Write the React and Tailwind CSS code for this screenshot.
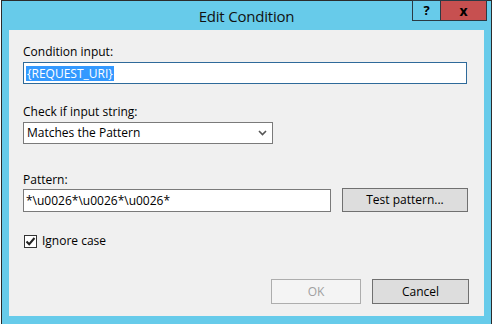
import React from "react";

const font = { fontFamily: '"Open Sans", "Noto Sans", sans-serif' };

function Chevron() {
  return (
    <svg width="9" height="6" viewBox="0 0 9 6" className="block">
      <path d="M1 1 L4.5 4.5 L8 1" fill="none" stroke="#555" strokeWidth="1.6" />
    </svg>
  );
}

function Check() {
  return (
    <svg width="11" height="11" viewBox="0 0 11 11" className="block">
      <path d="M1.5 5.5 L4.2 8.2 L9.5 2" fill="none" stroke="#222" strokeWidth="2" />
    </svg>
  );
}

export default function App() {
  return (
    <div className="w-[498px] h-[324px] bg-white overflow-hidden flex text-[12px] text-black" style={font}>
      <div className="ml-[1px] w-[491px] h-[324px] border-t border-l border-r border-[#2b2b2b] bg-[#67cbea] flex flex-col">
        {/* title bar */}
        <div className="relative h-[29px] flex justify-center items-center">
          <span className="text-[15px] text-[#111] leading-none pt-[1px] tracking-[-0.2px]">Edit Condition</span>
          <div className="absolute right-[4px] top-[-1px] flex h-[21px]">
            <div className="w-[29px] h-full border border-[#2b3a44] flex items-center justify-center font-bold text-[13px] leading-none">
              ?
            </div>
            <div className="w-[46px] h-full border border-l-0 border-[#2b3a44] bg-[#c75050] flex items-center justify-center font-bold text-[14px] leading-none">
              x
            </div>
          </div>
        </div>

        {/* body */}
        <div className="ml-[7px] w-[475px] h-[286px] bg-[#f0f0f0] pl-[14px] pr-[15px] pt-[14px]">
          <div className="h-[16px] leading-[16px]">Condition input:</div>
          <div className="mt-[2px] w-[444px] h-[22px] bg-white border border-[#2e6a9a] flex items-center pl-[2px]">
            <span className="bg-[#3399ff] text-white leading-[15px] px-[1px]">{"{REQUEST_URI}"}</span>
          </div>

          <div className="mt-[20px] h-[16px] leading-[16px]">Check if input string:</div>
          <div className="mt-[2px] w-[250px] h-[22px] bg-white border border-[#7a7a7a] flex items-center justify-between pl-[3px] pr-[5px]">
            <span>Matches the Pattern</span>
            <Chevron />
          </div>

          <div className="mt-[28px] h-[16px] leading-[16px]">Pattern:</div>
          <div className="flex items-start">
            <div className="mt-[1px] w-[308px] h-[23px] bg-white border border-[#7a7a7a] flex items-center pl-[2px]">
              *\u0026*\u0026*\u0026*
            </div>
            <div className="ml-[11px] w-[126px] h-[24px] bg-[#dddddd] border border-[#707070] flex items-center justify-center">
              Test pattern...
            </div>
          </div>

          <div className="mt-[20px] flex items-center">
            <div className="ml-[1px] w-[13px] h-[13px] bg-white border border-[#333] flex items-center justify-center">
              <Check />
            </div>
            <span className="ml-[5px]">Ignore case</span>
          </div>

          <div className="mt-[29px] flex justify-end gap-[11px]">
            <div className="w-[90px] h-[25px] bg-[#f4f4f4] border border-[#adadad] text-[#a0a0a0] flex items-center justify-center">
              OK
            </div>
            <div className="w-[97px] h-[25px] bg-[#dddddd] border border-[#707070] flex items-center justify-center">
              Cancel
            </div>
          </div>
        </div>
      </div>
    </div>
  );
}
